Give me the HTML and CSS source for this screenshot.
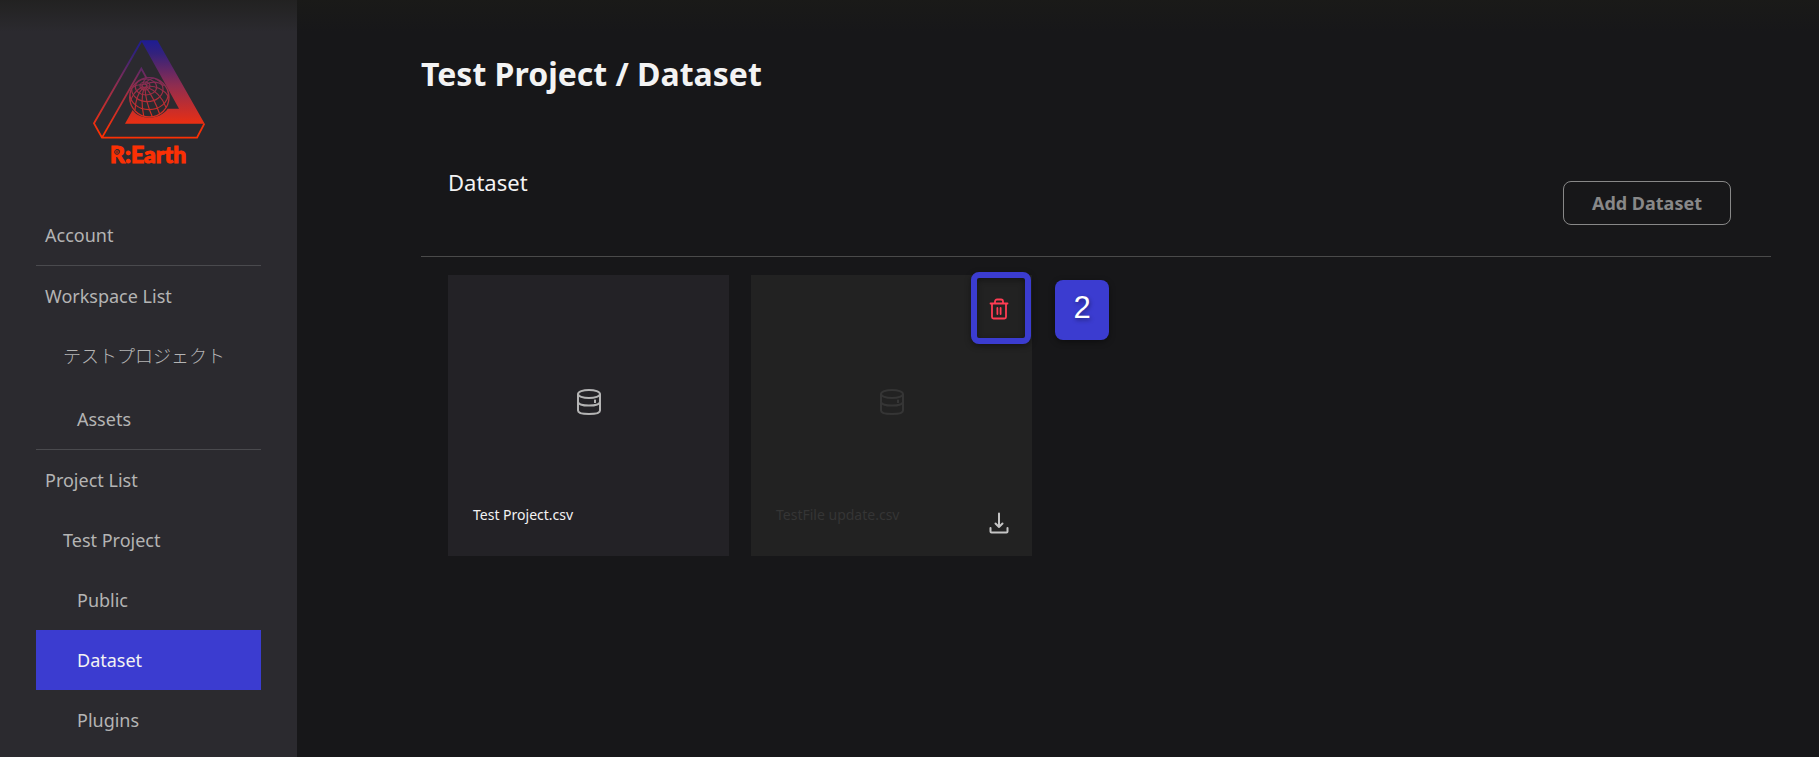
FILE: index.html
```html
<!DOCTYPE html>
<html lang="en">
<head>
<meta charset="utf-8">
<meta name="viewport" content="width=device-width, initial-scale=1">
<title>Test Project / Dataset</title>
<link rel="stylesheet" href="styles.css">
</head>
<body>
<svg width="0" height="0" class="defs" aria-hidden="true">
  <symbol id="database" viewBox="0 0 28 28">
    <g fill="none" stroke="currentColor" stroke-width="2">
      <ellipse cx="14" cy="6" rx="11" ry="4"/>
      <path d="M3 6V22.500C3 24.800 7.900 26 14 26S25 24.800 25 22.500V6"/>
      <path d="M3 14C3.500 16.500 8 17.600 14 17.600S24.500 16.500 25 14"/>
    </g>
    <rect x="19" y="11.500" width="2" height="3.500" rx=".6" fill="currentColor"/>
  </symbol>
</svg>
<div class="app">
  <aside class="sidebar">
    <svg class="logo" viewBox="38 28 336 378" role="img" aria-label="R:Earth">
      <defs>
        <linearGradient id="brand" gradientUnits="userSpaceOnUse" x1="0" y1="28" x2="0" y2="300">
          <stop offset="0" stop-color="#1d1c94"/>
          <stop offset=".15" stop-color="#33227c"/>
          <stop offset=".5" stop-color="#8f2d50"/>
          <stop offset=".85" stop-color="#da2e1e"/>
          <stop offset="1" stop-color="#fb3004"/>
        </linearGradient>
        <clipPath id="ball"><circle cx="207" cy="200" r="59"/></clipPath>
      </defs>
      <path fill="url(#brand)" d="M182 29H231L373 279H134L157 238C168 256 190 261 207 261C230 260 252 250 262 234H296Z"/>
      <g fill="none" stroke="url(#brand)" stroke-width="5.500">
        <path d="M183 31L41 278L65 321H350L372 279"/>
        <path d="M65 321L183 114L199 143"/>
      </g>
      <g fill="none" stroke="url(#brand)" stroke-width="3.500">
        <circle cx="207" cy="200" r="59" stroke-width="4"/>
        <g clip-path="url(#ball)">
          <ellipse cx="192" cy="165" rx="7" ry="5" stroke-width="4"/>
          <ellipse cx="194" cy="166" rx="15" ry="12"/>
          <ellipse cx="197" cy="169" rx="32" ry="24"/>
          <ellipse cx="201" cy="176" rx="47" ry="37"/>
          <ellipse cx="206" cy="188" rx="58" ry="49"/>
          <path d="M185 169Q156 185 150 215M188 171Q166 195 164 238M191 172Q180 205 190 256M194 172Q196 215 216 258M197 171Q220 200 238 250M199 169Q240 185 257 230M200 166Q245 165 266 200M198 161Q225 146 250 165M194 159Q204 146 220 142M188 159Q190 148 198 143M185 163Q170 160 158 170"/>
        </g>
      </g>
      <text class="logo-text" x="89" y="398">R:Earth</text>
      <circle cx="110" cy="364" r="7" fill="#fb3004" stroke="#2b2a2f" stroke-width="3"/>
      <path d="M110 360V368M106 364H114" stroke="#2b2a2f" stroke-width="2"/>
    </svg>
    <nav class="nav" aria-label="Settings">
      <ul class="nav-group">
        <li><a class="nav-link" href="#account">Account</a></li>
      </ul>
      <ul class="nav-group">
        <li><a class="nav-link" href="#workspaces">Workspace List</a></li>
        <li><a class="nav-link nav-sub nav-ja" lang="ja" href="#workspace">テストプロジェクト</a></li>
        <li><a class="nav-link nav-leaf" href="#assets">Assets</a></li>
      </ul>
      <ul class="nav-group">
        <li><a class="nav-link" href="#projects">Project List</a></li>
        <li><a class="nav-link nav-sub" href="#project">Test Project</a></li>
        <li><a class="nav-link nav-leaf" href="#public">Public</a></li>
        <li><a class="nav-link nav-leaf nav-current" href="#dataset" aria-current="page">Dataset</a></li>
        <li><a class="nav-link nav-leaf" href="#plugins">Plugins</a></li>
      </ul>
    </nav>
  </aside>
  <main class="main">
    <h1 class="page-title">Test Project / Dataset</h1>
    <section>
      <header class="section-head">
        <h2 class="section-title">Dataset</h2>
        <button class="add-button" type="button">Add Dataset</button>
      </header>
      <div class="cards">
        <article class="card">
          <svg class="card-icon" aria-hidden="true"><use href="#database"/></svg>
          <p class="card-name">Test Project.csv</p>
        </article>
        <article class="card card-hover">
          <svg class="card-icon" aria-hidden="true"><use href="#database"/></svg>
          <p class="card-name">TestFile update.csv</p>
          <button class="icon-button remove" type="button" aria-label="Remove dataset">
            <svg class="icon" viewBox="0 0 24 24" fill="none" stroke="currentColor" stroke-width="1.800" stroke-linecap="round" stroke-linejoin="round" aria-hidden="true">
              <path d="M3.500 6.500H20.500M5 6.500V20A1.500 1.500 0 0 0 6.500 21.500H17.500A1.500 1.500 0 0 0 19 20V6.500M8 6.500V4.500A2 2 0 0 1 10 2.500H14A2 2 0 0 1 16 4.500V6.500M10.400 11V17M13.600 11V17"/>
            </svg>
          </button>
          <button class="icon-button download" type="button" aria-label="Download dataset">
            <svg class="icon" viewBox="0 0 24 24" fill="none" stroke="currentColor" stroke-width="2" stroke-linecap="round" stroke-linejoin="round" aria-hidden="true">
              <path d="M12 2.500V16M8.500 12.500L12 16L15.500 12.500M3.500 17V20.500A1 1 0 0 0 4.500 21.500H19.500A1 1 0 0 0 20.500 20.500V17"/>
            </svg>
          </button>
          <span class="frame"></span>
          <span class="step">2</span>
        </article>
      </div>
    </section>
  </main>
</div>
</body>
</html>
```
FILE: styles.css
```css
* {
  box-sizing: border-box;
}

body {
  margin: 0;
  background: #171719;
  color: #f3f3f3;
  font-family: "Noto Sans", "Noto Sans CJK JP", sans-serif;
  font-size: 18px;
}

.defs {
  position: absolute;
}

.app {
  position: relative;
  display: flex;
  min-height: 100vh;
}

/* soft shadow cast by the edge above the page */
.app::before {
  content: "";
  position: absolute;
  inset: 0 0 auto;
  height: 32px;
  background: linear-gradient(rgba(28, 28, 24, 0.6), rgba(28, 28, 24, 0));
  pointer-events: none;
}

.sidebar {
  flex: none;
  width: 297px;
  padding: 40px 36px 0;
  background: #2b2a2f;
}

.logo {
  display: block;
  width: 112px;
  height: 126px;
  margin: 0 auto 39px;
  overflow: visible;
}

.logo-text {
  fill: #fb3004;
  stroke: #fb3004;
  stroke-width: 3px;
  font-family: Lato, sans-serif;
  font-size: 69px;
  font-weight: 900;
}

.nav-group {
  margin: 0;
  padding: 0;
  list-style: none;
}

.nav-group + .nav-group {
  border-top: 1px solid #4a4a4e;
}

.nav-link {
  display: flex;
  align-items: center;
  height: 60px;
  padding-left: 9px;
  color: #b4b4b4;
  line-height: 24px;
  text-decoration: none;
}

.nav-sub {
  padding-left: 27px;
}

.nav-leaf {
  padding-left: 41px;
}

.nav-ja {
  height: 63px;
  padding-bottom: 6px;
  font-family: "Noto Sans CJK JP", sans-serif;
  font-weight: 300;
}

.nav-current {
  background: #3b3cd0;
  color: #f3f3f3;
}

.main {
  flex: 1;
  min-width: 0;
  padding: 51px 48px 48px 124px;
}

.page-title {
  margin: 0 0 73px;
  font-size: 32px;
  font-weight: 700;
  line-height: 46px;
}

.section-head {
  display: flex;
  justify-content: space-between;
  padding: 0 40px 31px 27px;
  border-bottom: 1px solid #4a4a4a;
}

.section-title {
  margin: 0;
  font-size: 22px;
  font-weight: 400;
  line-height: 24px;
}

.add-button {
  height: 44px;
  margin-top: 11px;
  padding: 0 28px;
  border: 1px solid #888;
  border-radius: 8px;
  background: transparent;
  color: #888;
  font: inherit;
  font-weight: 700;
}

.cards {
  display: grid;
  grid-template-columns: repeat(auto-fill, 281px);
  gap: 22px;
  padding: 18px 27px;
}

.card {
  position: relative;
  display: flex;
  flex-direction: column;
  height: 281px;
  padding: 113px 25px 0;
  background: #232226;
}

.card-icon {
  align-self: center;
  width: 28px;
  height: 28px;
  color: #b4b4b4;
}

.card-name {
  margin: 89px 0 0;
  font-size: 14px;
  line-height: 20px;
}

.card-hover {
  background: #222;
}

.card-hover .card-icon,
.card-hover .card-name {
  color: #353535;
}

.icon-button {
  position: absolute;
  right: 21px;
  display: flex;
  padding: 0;
  border: 0;
  background: none;
}

.icon {
  width: 24px;
  height: 24px;
}

.remove {
  top: 22px;
  color: #ff3c53;
}

.download {
  bottom: 21px;
  color: #c4c4c4;
}

.frame {
  position: absolute;
  top: -3px;
  left: 220px;
  width: 60px;
  height: 72px;
  border: 6px solid #3b3cd0;
  border-radius: 8px;
  box-shadow: 0 2px 6px rgba(0, 0, 0, 0.4), inset 0 2px 6px rgba(0, 0, 0, 0.4);
  pointer-events: none;
}

.step {
  position: absolute;
  top: 5px;
  left: 304px;
  width: 54px;
  height: 60px;
  border-radius: 8px;
  background: #3b3cd0;
  box-shadow: 0 2px 6px rgba(0, 0, 0, 0.4);
  color: #fff;
  font-family: "Liberation Sans", Arial, sans-serif;
  font-size: 31px;
  line-height: 56px;
  text-align: center;
  text-shadow: 1px 2px 4px rgba(0, 0, 0, 0.4);
}
```
